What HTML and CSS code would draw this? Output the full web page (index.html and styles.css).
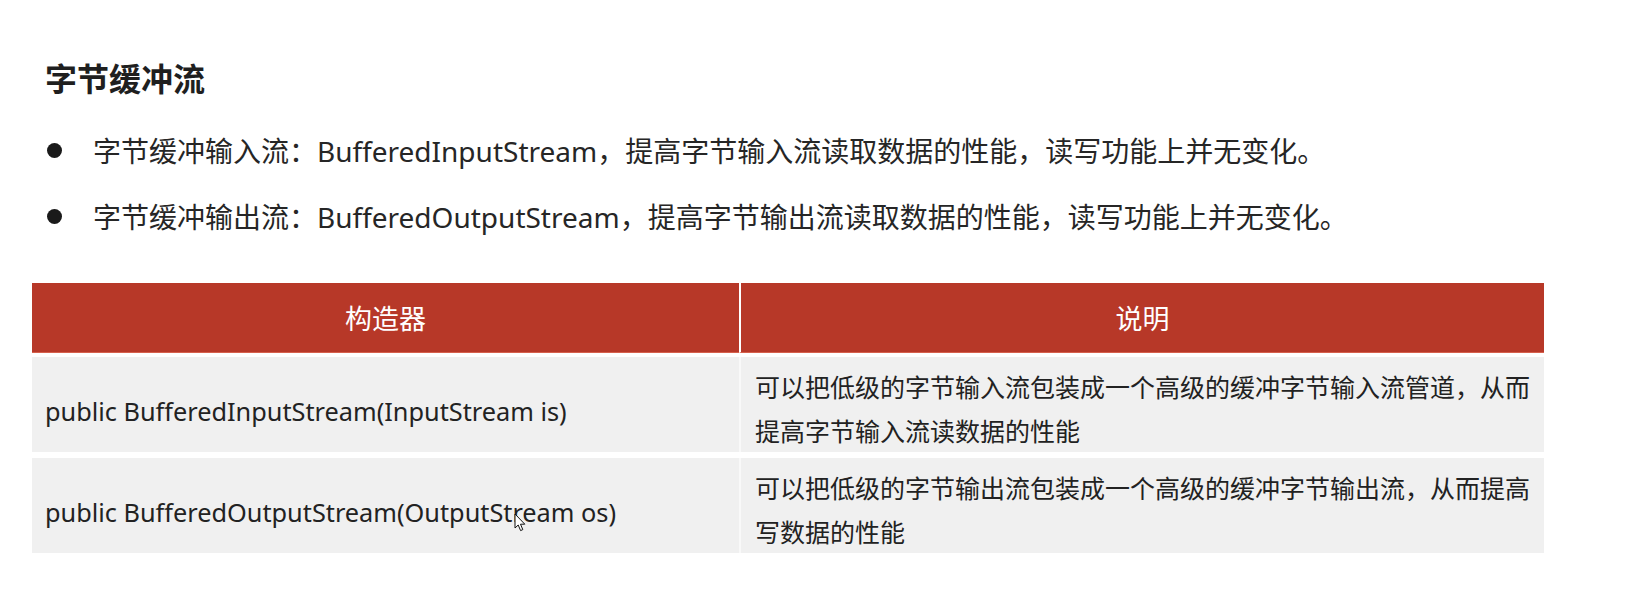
FILE: index.html
```html
<!DOCTYPE html>
<html lang="zh-CN">
<head>
<meta charset="utf-8">
<title>字节缓冲流</title>
<link rel="stylesheet" href="styles.css">
</head>
<body>
<div class="page">
  <h2 class="title">字节缓冲流</h2>
  <ul class="points">
    <li>字节缓冲输入流：BufferedInputStream，提高字节输入流读取数据的性能，读写功能上并无变化。</li>
    <li>字节缓冲输出流：BufferedOutputStream，提高字节输出流读取数据的性能，读写功能上并无变化。</li>
  </ul>
  <div class="table">
    <div class="th">构造器</div>
    <div class="th th-2">说明</div>
    <div class="td td-code">public BufferedInputStream(InputStream is)</div>
    <div class="td td-desc">可以把低级的字节输入流包装成一个高级的缓冲字节输入流管道，从而<br>提高字节输入流读数据的性能</div>
    <div class="td td-code">public BufferedOutputStream(OutputStream os)<svg class="cursor" width="12" height="19" viewBox="0 0 12 19"><path d="M1 1 L1 15 L4.2 12 L6.6 17.6 L8.8 16.6 L6.5 11.2 L10.8 11.2 Z" fill="#fff" stroke="#111" stroke-width="1" stroke-linejoin="round"/></svg></div>
    <div class="td td-desc">可以把低级的字节输出流包装成一个高级的缓冲字节输出流，从而提高<br>写数据的性能</div>
  </div>
</div>
</body>
</html>
```
FILE: styles.css
```css
html, body {
  margin: 0;
  padding: 0;
  background: #ffffff;
}

body {
  font-family: "Noto Sans", "Noto Sans CJK SC", sans-serif;
  color: #222222;
}

.page {
  padding: 57px 0 0 0;
}

.title {
  margin: 0 0 0 45px;
  font-family: "Noto Sans CJK SC", sans-serif;
  font-size: 32px;
  font-weight: 700;
  line-height: 41px;
  color: #1f1f1f;
}

.points {
  list-style: none;
  margin: 19px 0 0 0;
  padding: 0;
}

.points li {
  display: flex;
  align-items: center;
  height: 66px;
  padding-left: 47px;
  font-size: 28px;
  color: #262626;
  white-space: nowrap;
}

.points li::before {
  content: "";
  flex: none;
  width: 15px;
  height: 15px;
  border-radius: 50%;
  background: #1a1a1a;
  margin-right: 31px;
}

.table {
  display: grid;
  grid-template-columns: 707px 805px;
  margin: 34px 0 0 32px;
  width: 1512px;
}

.th {
  height: 69px;
  background: #b73828;
  border-bottom: 1px solid #d6604c;
  color: #ffffff;
  font-family: "Noto Sans CJK SC", sans-serif;
  font-size: 27px;
  display: flex;
  align-items: center;
  justify-content: center;
  margin-bottom: 4px;
}

.th-2 {
  border-left: 2px solid #ffffff;
}

.td {
  background: #f0f0f0;
  height: 95px;
  box-sizing: border-box;
  margin-bottom: 6px;
  color: #222222;
}

.td-code {
  position: relative;
  display: flex;
  align-items: center;
  padding: 12px 0 0 13px;
  font-size: 25.3px;
  white-space: nowrap;
}

.td-desc {
  border-left: 2px solid #f9f9f9;
  padding: 7px 0 0 14px;
  font-family: "Noto Sans CJK SC", sans-serif;
  font-size: 25px;
  line-height: 44px;
  white-space: nowrap;
}

.cursor {
  position: absolute;
  left: 482px;
  top: 55px;
}
```
